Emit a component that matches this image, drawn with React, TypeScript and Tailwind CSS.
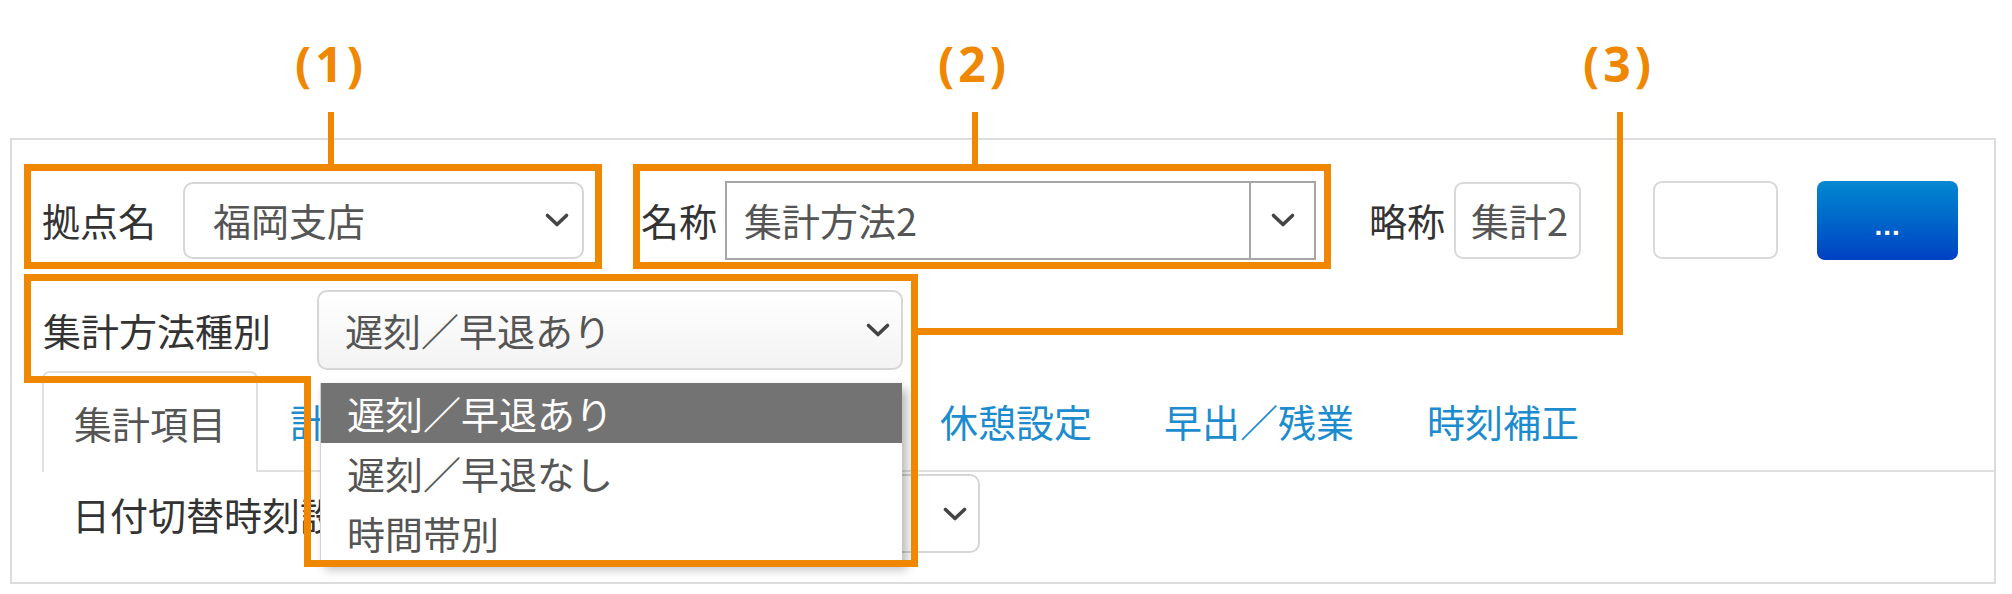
import React from "react";

const Chevron = () => (
  <svg width="26" height="16" viewBox="0 0 26 16" className="shrink-0">
    <polyline
      points="3.5,3.5 13,12.5 22.5,3.5"
      fill="none"
      stroke="#444"
      strokeWidth="3.6"
      strokeLinecap="round"
      strokeLinejoin="round"
    />
  </svg>
);

const tabs: { label: string; cls: string }[] = [
  { label: "計算設定", cls: "px-[32px]" },
  { label: "勤務時間", cls: "px-[32px]" },
  { label: "遅刻早退", cls: "px-[32px]" },
  { label: "休憩設定", cls: "pl-[34px] pr-[37px]" },
  { label: "早出／残業", cls: "pl-[35px] pr-[37px]" },
  { label: "時刻補正", cls: "pl-[36px] pr-[36px]" },
];

export default function App() {
  return (
    <div className="relative w-[2012px] h-[594px] overflow-hidden bg-white font-['Noto_Sans_CJK_JP','Noto_Sans',sans-serif] text-[#333]">
      <div className="pl-[10px] pt-[138px]">
        <div className="relative w-[1986px] h-[446px] border-2 border-[#dcdcdc]">
          {/* Row 1 */}
          <div className="flex items-center mt-[40px] pl-[30px] h-[80px]">
            <span className="text-[38px] leading-none">拠点名</span>
            <div className="ml-[27px] w-[401px] h-[77px] rounded-[10px] border-2 border-[#d6d6d6] flex items-center justify-between pl-[28px] pr-[12px] text-[#555]">
              <span className="text-[38px] leading-none">福岡支店</span>
              <Chevron />
            </div>
            <span className="ml-[57px] text-[38px] leading-none">名称</span>
            <div className="ml-[8px] w-[591px] h-[79px] border-2 border-[#a6a6a6] flex">
              <div className="flex-1 flex items-center pl-[17px] text-[38px] leading-none text-[#555]">集計方法2</div>
              <div className="w-[65px] border-l-2 border-[#a6a6a6] flex items-center justify-center">
                <Chevron />
              </div>
            </div>
            <span className="ml-[53px] text-[38px] leading-none">略称</span>
            <div className="ml-[9px] w-[127px] h-[77px] rounded-[9px] border-2 border-[#d9d9d9] flex items-center pl-[15px] text-[38px] leading-none text-[#555]">
              集計2
            </div>
            <div className="ml-[72px] w-[125px] h-[78px] rounded-[9px] border-2 border-[#d9d9d9]" />
            <button className="ml-[39px] w-[141px] h-[79px] rounded-[8px] bg-gradient-to-b from-[#0a88d0] to-[#0040c2] text-white flex items-center justify-center font-['Liberation_Sans',sans-serif] font-bold text-[28px] leading-none pt-[12px] tracking-[1px]">
              ...
            </button>
          </div>

          {/* Row 2 */}
          <div className="relative z-10 flex items-center mt-[30px] pl-[31px] h-[80px]">
            <span className="text-[38px] leading-none">集計方法種別</span>
            <div className="relative ml-[46px] w-[586px] h-[80px] rounded-[10px] border-2 border-[#d6d6d6] bg-gradient-to-b from-white to-[#f3f3f3] flex items-center justify-between pl-[26px] pr-[10px] text-[#555]">
              <span className="text-[38px] leading-none">遅刻／早退あり</span>
              <Chevron />
              <div className="absolute left-[1px] top-[91px] w-[582px] bg-white border-l border-[#d0d0d0] shadow-[5px_6px_10px_rgba(0,0,0,0.28)]">
                <div className="h-[60px] flex items-center pl-[26px] bg-[#737373] text-white text-[38px] leading-none">遅刻／早退あり</div>
                <div className="h-[60px] flex items-center pl-[26px] text-[#555] text-[38px] leading-none">遅刻／早退なし</div>
                <div className="h-[60px] flex items-center pl-[26px] text-[#555] text-[38px] leading-none">時間帯別</div>
              </div>
            </div>
          </div>

          {/* Tabs */}
          <div className="mt-[3px] ml-[30px] flex items-end border-b-2 border-[#e0e0e0] h-[99px]">
            <div className="relative -mb-[2px] h-[101px] border-2 border-b-0 border-[#e0e0e0] rounded-t-[8px] bg-white px-[30px] flex items-center text-[38px] leading-none text-[#555]">
              集計項目
            </div>
            {tabs.map((t) => (
              <div key={t.label} className={`h-[99px] flex items-center text-[38px] leading-none text-[#1c8ccf] ${t.cls}`}>
                {t.label}
              </div>
            ))}
          </div>

          {/* Row 4 */}
          <div className="flex items-center mt-[2px] pl-[60px] h-[79px]">
            <span className="text-[38px] leading-none">日付切替時刻設定</span>
            <div className="ml-[24px] w-[580px] h-[79px] rounded-[10px] border-2 border-[#d6d6d6] flex items-center justify-end pr-[10px]">
              <Chevron />
            </div>
          </div>
        </div>
      </div>

      {/* Annotation overlay */}
      <div className="absolute left-[284px] top-[40px] w-[90px] pl-[4px] text-center font-['Noto_Sans',sans-serif] font-bold text-[48px] leading-none text-[#ef8700] tracking-[4px]">
        (1)
      </div>
      <div className="absolute left-[927px] top-[40px] w-[90px] pl-[4px] text-center font-['Noto_Sans',sans-serif] font-bold text-[48px] leading-none text-[#ef8700] tracking-[4px]">
        (2)
      </div>
      <div className="absolute left-[1572px] top-[40px] w-[90px] pl-[4px] text-center font-['Noto_Sans',sans-serif] font-bold text-[48px] leading-none text-[#ef8700] tracking-[4px]">
        (3)
      </div>
      <svg className="absolute left-0 top-0 pointer-events-none z-20" width="2012" height="594" viewBox="0 0 2012 594">
        <g fill="none" stroke="#ef8700" strokeLinejoin="miter">
          <line x1="331" y1="112" x2="331" y2="165" strokeWidth="6" />
          <line x1="975" y1="112" x2="975" y2="165" strokeWidth="6" />
          <line x1="1620" y1="112" x2="1620" y2="335" strokeWidth="6" />
          <rect x="27.5" y="167.5" width="571" height="98" strokeWidth="7" />
          <rect x="636.5" y="167.5" width="691" height="98" strokeWidth="7" />
          <path d="M27.5 277.5 H914.5 V563.5 H307.5 V379.5 H27.5 Z" strokeWidth="7" />
          <line x1="911" y1="331.5" x2="1623" y2="331.5" strokeWidth="7" />
        </g>
      </svg>
    </div>
  );
}
